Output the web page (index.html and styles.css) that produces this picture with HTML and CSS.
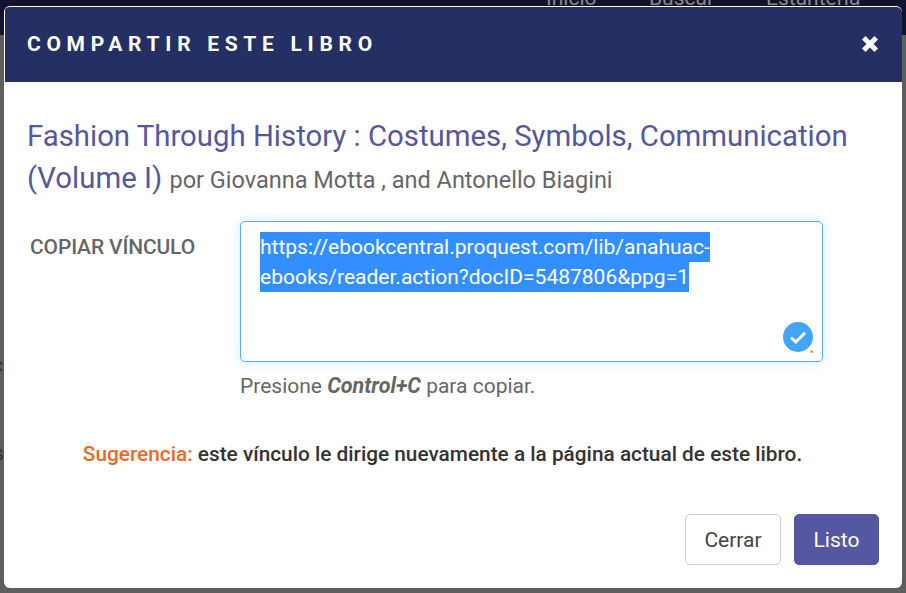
FILE: index.html
```html
<!DOCTYPE html>
<html lang="es">
<head>
<meta charset="utf-8">
<title>Compartir este libro</title>
<link rel="stylesheet" href="styles.css">
</head>
<body>
<nav class="topnav">
  <span class="nav-inicio">Inicio</span>
  <span class="nav-buscar">Buscar</span>
  <span class="nav-estanteria">Estantería</span>
</nav>
<span class="bg-frag bg-s">s</span>
<span class="bg-frag bg-c">c</span>
<section class="modal">
  <header class="modal-head">
    <h2 class="modal-title">COMPARTIR ESTE LIBRO</h2>
    <svg class="close" viewBox="3 3 10 10" width="16" height="16" aria-label="Cerrar"><path d="M3 5.2 5.2 3 8 5.8 10.8 3 13 5.2 10.2 8 13 10.8 10.8 13 8 10.2 5.2 13 3 10.8 5.8 8Z" fill="#fff"/></svg>
  </header>
  <div class="modal-body">
    <p class="book"><span class="book-title">Fashion Through History : Costumes, Symbols, Communication (Volume I)</span> <span class="book-by">por Giovanna Motta , and Antonello Biagini</span></p>
    <div class="link-row">
      <div class="link-label">COPIAR VÍNCULO</div>
      <div class="link-col">
        <div class="link-box">
          <span class="sel">https://ebookcentral.proquest.com/lib/anahuac-</span>
          <span class="sel">ebooks/reader.action?docID=5487806&amp;ppg=1</span>
          <svg class="check" viewBox="0 0 30 30" width="30" height="30"><circle cx="15" cy="15" r="15" fill="#42a5f8"/><path d="M8 15.5 12.8 20 22 10.8" fill="none" stroke="#fff" stroke-width="3"/></svg>
          <i class="dot"></i>
        </div>
        <p class="hint">Presione <b>Control+C</b> para copiar.</p>
      </div>
    </div>
    <p class="tip"><strong>Sugerencia:</strong> este vínculo le dirige nuevamente a la página actual de este libro.</p>
    <div class="actions">
      <button class="btn btn-close">Cerrar</button>
      <button class="btn btn-done">Listo</button>
    </div>
  </div>
</section>
</body>
</html>
```
FILE: styles.css
```css
* { box-sizing: border-box; }
html, body { margin: 0; height: 100%; }
body {
  width: 906px;
  height: 593px;
  overflow: hidden;
  position: relative;
  background: #5e5e5e;
  font-family: Roboto, "Liberation Sans", sans-serif;
}
.topnav {
  height: 35px;
  background: #10142e;
  color: #8a8a8a;
  font-size: 21px;
  position: relative;
}
.topnav span { position: absolute; top: -14px; line-height: 24px; }
.nav-inicio { left: 546px; }
.nav-buscar { left: 649px; }
.nav-estanteria { left: 766px; }
.bg-frag { position: absolute; color: #333; font-size: 21px; line-height: 24px; }
.bg-s { left: -7px; top: 441px; }
.bg-c { left: -8px; top: 353px; color: #4a2a20; }
.modal {
  position: absolute;
  left: 4px;
  top: 6px;
  width: 898px;
  height: 582px;
  background: #fff;
  border-radius: 6px;
  border-top: 1px solid #fff;
  overflow: hidden;
}
.modal-head {
  margin-left: 1px;
  height: 75px;
  background: #242f63;
  display: flex;
  align-items: center;
  justify-content: space-between;
  padding: 0 24px 2px 22px;
}
.modal-title {
  margin: 0;
  color: #fff;
  font-size: 21px;
  font-weight: 700;
  letter-spacing: 5.7px;
}
.close { display: block; }
.modal-body { padding: 0 23px 0 23px; }
.book { margin: 33px 0 0; line-height: 42px; font-size: 29.35px; }
.book-title { color: #5557a0; }
.book-by { color: #666; font-size: 23.5px; }
.link-row { display: flex; margin-top: 20px; }
.link-label {
  width: 213px;
  padding: 14px 0 0 3px;
  color: #666;
  font-size: 21px;
  font-weight: 500;
  line-height: 24px;
  letter-spacing: -0.15px;
}
.link-col { width: 583px; }
.link-box {
  position: relative;
  height: 141px;
  padding: 10px 19px;
  border: 1px solid #5aaef0;
  border-radius: 5px;
  box-shadow: 0 0 12px rgba(90, 174, 240, 0.25);
  font-size: 21px;
}
.sel {
  display: block;
  width: fit-content;
  line-height: 30px;
  background: #338fff;
  color: #fff;
}
.check { position: absolute; right: 9px; bottom: 9px; }
.dot {
  position: absolute;
  right: 9px;
  bottom: 8px;
  width: 3px;
  height: 3px;
  border-radius: 50%;
  background: #f5a030;
}
.hint { margin: 12px 0 0; color: #666; font-size: 21px; line-height: 24px; }
.hint b { font-style: italic; font-weight: 700; font-size: 21.5px; }
.tip {
  margin: 43px 0 0;
  padding-right: 21px;
  text-align: center;
  color: #333;
  font-size: 20.8px;
  font-weight: 500;
  line-height: 26px;
}
.tip strong { color: #ea6a28; font-weight: 500; }
.actions { display: flex; justify-content: flex-end; gap: 13px; margin-top: 47px; }
.btn {
  height: 51px;
  border-radius: 5px;
  font-family: inherit;
  font-size: 21px;
  padding: 0;
}
.btn-close { width: 96px; background: #fff; border: 1px solid #ccc; color: #444; }
.btn-done { width: 85px; background: #5557a0; border: 1px solid #5557a0; color: #fff; }
```
